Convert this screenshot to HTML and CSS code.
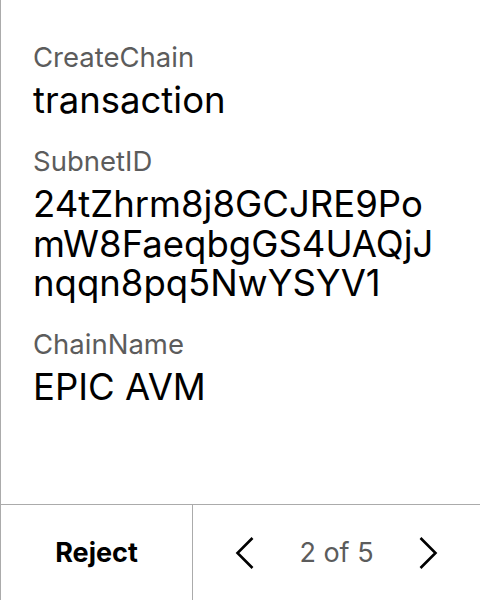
FILE: index.html
```html
<!DOCTYPE html>
<html>
<head>
<meta charset="utf-8">
<link rel="stylesheet" href="styles.css">
</head>
<body>
<div class="screen">
  <div class="content">
    <div class="field">
      <div class="label">CreateChain</div>
      <div class="value">transaction</div>
    </div>
    <div class="field">
      <div class="label">SubnetID</div>
      <div class="value">24tZhrm8j8GCJRE9Po<br>mW8FaeqbgGS4UAQjJ<br>nqqn8pq5NwYSYV1</div>
    </div>
    <div class="field">
      <div class="label">ChainName</div>
      <div class="value">EPIC AVM</div>
    </div>
  </div>
  <div class="footer">
    <div class="reject">Reject</div>
    <div class="pager">
      <svg class="chev" width="20" height="32" viewBox="0 0 20 32"><path d="M17.5 1 L2.5 16 L17.5 31" fill="none" stroke="#000" stroke-width="2.6"/></svg>
      <span class="count">2 of 5</span>
      <svg class="chev" width="20" height="32" viewBox="0 0 20 32"><path d="M2.5 1 L17.5 16 L2.5 31" fill="none" stroke="#000" stroke-width="2.6"/></svg>
    </div>
  </div>
</div>
</body>
</html>
```
FILE: styles.css
```css
html, body {
  margin: 0;
  padding: 0;
  background: #fff;
}
.screen {
  width: 480px;
  height: 600px;
  box-sizing: border-box;
  border-left: 1px solid #ababab;
  display: flex;
  flex-direction: column;
  font-family: Inter, "Noto Sans", sans-serif;
}
.content {
  flex: 1;
  padding: 41px 0 0 32px;
  display: flex;
  flex-direction: column;
  gap: 24.5px;
}
.field {
  display: flex;
  flex-direction: column;
  gap: 8px;
}
.label {
  font-size: 27.5px;
  line-height: 32px;
  color: #5c5c5c;
}
.value {
  font-size: 36.5px;
  line-height: 39.5px;
  color: #000;
}
.footer {
  height: 95px;
  border-top: 1px solid #ababab;
  display: flex;
}
.reject {
  width: 191px;
  border-right: 1px solid #ababab;
  display: flex;
  align-items: center;
  justify-content: center;
  font-size: 27px;
  font-weight: 700;
  color: #000;
}
.pager {
  flex: 1;
  display: flex;
  align-items: center;
  justify-content: center;
  gap: 44px;
}
.count {
  font-size: 27px;
  color: #5c5c5c;
}
.chev {
  display: block;
}
```
